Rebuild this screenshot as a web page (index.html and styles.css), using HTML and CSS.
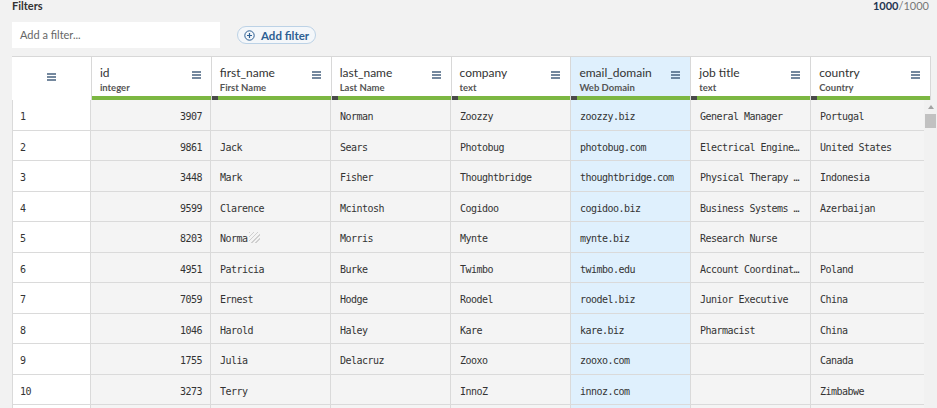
FILE: index.html
```html
<!DOCTYPE html>
<html>
<head>
<meta charset="utf-8">
<link rel="stylesheet" href="styles.css">
</head>
<body>
<div class="topbar">
  <div class="title">Filters</div>
  <div class="count"><b>1000</b>/1000</div>
</div>
<div class="filterbar">
  <div class="filter-input">Add a filter...</div>
  <button class="add-btn">
    <svg width="11" height="11" viewBox="0 0 11 11"><circle cx="5.5" cy="5.5" r="4.7" fill="none" stroke="#2d5f93" stroke-width="1"/><path d="M5.5 3v5M3 5.5h5" stroke="#2d5f93" stroke-width="1.2"/></svg>
    <span>Add filter</span>
  </button>
</div>
<div class="grid">
  <div class="head">
    <div class="hcell rownum"><svg class="menu" width="9" height="8" viewBox="0 0 9 8"><path d="M0 1h9M0 4h9M0 7h9" stroke="#47617f" stroke-width="1.3"/></svg></div>
    <div class="hcell"><div class="hname">id</div><div class="hsub">integer</div><svg class="menu" width="9" height="8" viewBox="0 0 9 8"><path d="M0 1h9M0 4h9M0 7h9" stroke="#47617f" stroke-width="1.3"/></svg><div class="bar nohandle"></div></div>
    <div class="hcell"><div class="hname">first_name</div><div class="hsub">First Name</div><svg class="menu" width="9" height="8" viewBox="0 0 9 8"><path d="M0 1h9M0 4h9M0 7h9" stroke="#47617f" stroke-width="1.3"/></svg><div class="bar"></div></div>
    <div class="hcell"><div class="hname">last_name</div><div class="hsub">Last Name</div><svg class="menu" width="9" height="8" viewBox="0 0 9 8"><path d="M0 1h9M0 4h9M0 7h9" stroke="#47617f" stroke-width="1.3"/></svg><div class="bar"></div></div>
    <div class="hcell"><div class="hname">company</div><div class="hsub">text</div><svg class="menu" width="9" height="8" viewBox="0 0 9 8"><path d="M0 1h9M0 4h9M0 7h9" stroke="#47617f" stroke-width="1.3"/></svg><div class="bar"></div></div>
    <div class="hcell sel"><div class="hname">email_domain</div><div class="hsub">Web Domain</div><svg class="menu" width="9" height="8" viewBox="0 0 9 8"><path d="M0 1h9M0 4h9M0 7h9" stroke="#47617f" stroke-width="1.3"/></svg><div class="bar"></div></div>
    <div class="hcell"><div class="hname">job title</div><div class="hsub">text</div><svg class="menu" width="9" height="8" viewBox="0 0 9 8"><path d="M0 1h9M0 4h9M0 7h9" stroke="#47617f" stroke-width="1.3"/></svg><div class="bar"></div></div>
    <div class="hcell"><div class="hname">country</div><div class="hsub">Country</div><svg class="menu" width="9" height="8" viewBox="0 0 9 8"><path d="M0 1h9M0 4h9M0 7h9" stroke="#47617f" stroke-width="1.3"/></svg><div class="bar"></div></div>
  </div>
  <div class="bodywrap">
    <div class="rows">
      <div class="row"><div class="c rn">1</div><div class="c num">3907</div><div class="c"></div><div class="c">Norman</div><div class="c">Zoozzy</div><div class="c sel">zoozzy.biz</div><div class="c">General Manager</div><div class="c">Portugal</div></div>
      <div class="row"><div class="c rn">2</div><div class="c num">9861</div><div class="c">Jack</div><div class="c">Sears</div><div class="c">Photobug</div><div class="c sel">photobug.com</div><div class="c">Electrical Engine…</div><div class="c">United States</div></div>
      <div class="row"><div class="c rn">3</div><div class="c num">3448</div><div class="c">Mark</div><div class="c">Fisher</div><div class="c">Thoughtbridge</div><div class="c sel">thoughtbridge.com</div><div class="c">Physical Therapy …</div><div class="c">Indonesia</div></div>
      <div class="row"><div class="c rn">4</div><div class="c num">9599</div><div class="c">Clarence</div><div class="c">Mcintosh</div><div class="c">Cogidoo</div><div class="c sel">cogidoo.biz</div><div class="c">Business Systems …</div><div class="c">Azerbaijan</div></div>
      <div class="row"><div class="c rn">5</div><div class="c num">8203</div><div class="c">Norma<span class="hatch"></span></div><div class="c">Morris</div><div class="c">Mynte</div><div class="c sel">mynte.biz</div><div class="c">Research Nurse</div><div class="c"></div></div>
      <div class="row"><div class="c rn">6</div><div class="c num">4951</div><div class="c">Patricia</div><div class="c">Burke</div><div class="c">Twimbo</div><div class="c sel">twimbo.edu</div><div class="c">Account Coordinat…</div><div class="c">Poland</div></div>
      <div class="row"><div class="c rn">7</div><div class="c num">7059</div><div class="c">Ernest</div><div class="c">Hodge</div><div class="c">Roodel</div><div class="c sel">roodel.biz</div><div class="c">Junior Executive</div><div class="c">China</div></div>
      <div class="row"><div class="c rn">8</div><div class="c num">1046</div><div class="c">Harold</div><div class="c">Haley</div><div class="c">Kare</div><div class="c sel">kare.biz</div><div class="c">Pharmacist</div><div class="c">China</div></div>
      <div class="row"><div class="c rn">9</div><div class="c num">1755</div><div class="c">Julia</div><div class="c">Delacruz</div><div class="c">Zooxo</div><div class="c sel">zooxo.com</div><div class="c"></div><div class="c">Canada</div></div>
      <div class="row"><div class="c rn">10</div><div class="c num">3273</div><div class="c">Terry</div><div class="c"></div><div class="c">InnoZ</div><div class="c sel">innoz.com</div><div class="c"></div><div class="c">Zimbabwe</div></div>
      <div class="row"><div class="c rn"></div><div class="c num"></div><div class="c"></div><div class="c"></div><div class="c"></div><div class="c sel"></div><div class="c"></div><div class="c"></div></div>
    </div>
    <div class="scrollbar">
      <div class="arrow"></div>
      <div class="thumb"></div>
    </div>
  </div>
</div>
</body>
</html>
```
FILE: styles.css
```css
html, body {
  margin: 0;
  padding: 0;
  background: #f2f2f2;
  overflow: hidden;
  height: 408px;
}
body {
  font-family: Lato, "Open Sans", sans-serif;
  color: #333;
}
.topbar {
  display: flex;
  justify-content: space-between;
  padding: 0 8px 0 12px;
  height: 21px;
}
.title {
  font-size: 11px;
  font-weight: 700;
  color: #333;
  line-height: 12px;
}
.count {
  font-size: 11px;
  color: #777;
  line-height: 12px;
}
.count b {
  color: #1e3550;
}
.filterbar {
  display: flex;
  align-items: center;
  padding-left: 12px;
  height: 27px;
  gap: 17px;
}
.filter-input {
  width: 200px;
  height: 26px;
  background: #fff;
  font-size: 11px;
  color: #666;
  line-height: 26px;
  padding-left: 8px;
}
.add-btn {
  display: flex;
  align-items: center;
  gap: 6px;
  height: 18px;
  padding: 0 6px 0 6px;
  border: 1px solid #bcd2e6;
  border-radius: 10px;
  background: #f4f7fa;
  font-family: Lato, "Open Sans", sans-serif;
  font-size: 11.5px;
  font-weight: 700;
  color: #2d5f93;
  margin-top: 1px;
}
.grid {
  margin: 8px 0 0 12px;
}
.head {
  display: flex;
  width: 919px;
  border-top: 1px solid #d8d8d8;
  border-right: 1px solid #d8d8d8;
  box-sizing: border-box;
  height: 44px;
  background: #fff;
}
.hcell {
  position: relative;
  width: 120px;
  border-left: 1px solid #d8d8d8;
  box-sizing: border-box;
  background: #fff;
  padding: 9px 0 0 8px;
}
.hcell.rownum {
  width: 79px;
  border-left: none;
  display: flex;
  align-items: center;
  justify-content: center;
  padding: 0 0 4px 0;
}
.hcell.sel {
  background: #dff0fd;
}
.hname {
  font-size: 12px;
  line-height: 14px;
  color: #333;
}
.hsub {
  font-size: 9.5px;
  font-weight: 700;
  color: #555;
  line-height: 12px;
  margin-top: 2px;
}
.hcell .menu {
  position: absolute;
  right: 10px;
  top: 14px;
}
.hcell.rownum .menu {
  position: static;
}
.bar {
  position: absolute;
  left: 0;
  right: 0;
  bottom: 0;
  height: 4px;
  background: linear-gradient(to right, #4a4a4a 0, #4a4a4a 6px, #7cb742 6px);
}
.bar.nohandle {
  background: #7cb742;
}
.bodywrap {
  display: flex;
  width: 925px;
}
.rows {
  width: 912px;
  overflow: hidden;
}
.row {
  display: flex;
  height: 30.5px;
  border-bottom: 1px solid #dadada;
  box-sizing: border-box;
  width: 919px;
}
.c {
  width: 120px;
  flex: none;
  box-sizing: border-box;
  border-right: 1px solid #dadada;
  background: #f4f4f4;
  font-family: "DejaVu Sans Mono", monospace;
  font-size: 10px;
  letter-spacing: -0.52px;
  color: #333;
  line-height: 33px;
  padding: 0 8px 0 9px;
  white-space: nowrap;
  overflow: hidden;
}
.c:last-child {
  border-right: none;
}
.c.rn {
  width: 79px;
  background: #fff;
  padding-left: 7px;
  border-left: 1px solid #dadada;
}
.c.num {
  text-align: right;
  padding-right: 8px;
}
.c.sel {
  background: #dff0fd;
}
.hatch {
  display: inline-block;
  vertical-align: middle;
  width: 11px;
  height: 11px;
  margin-left: 1px;
  margin-top: -3px;
  background: repeating-linear-gradient(135deg, #cfcfcf 0 1px, #f4f4f4 1px 3px);
}
.scrollbar {
  width: 13px;
  background: #f1f1f1;
  height: 310px;
  display: flex;
  flex-direction: column;
  align-items: center;
}
.arrow {
  margin-top: 5px;
  width: 0;
  height: 0;
  border-left: 3.5px solid transparent;
  border-right: 3.5px solid transparent;
  border-bottom: 4px solid #a3a3a3;
}
.thumb {
  margin-top: 5px;
  width: 11px;
  height: 14px;
  background: #c1c1c1;
}
```
